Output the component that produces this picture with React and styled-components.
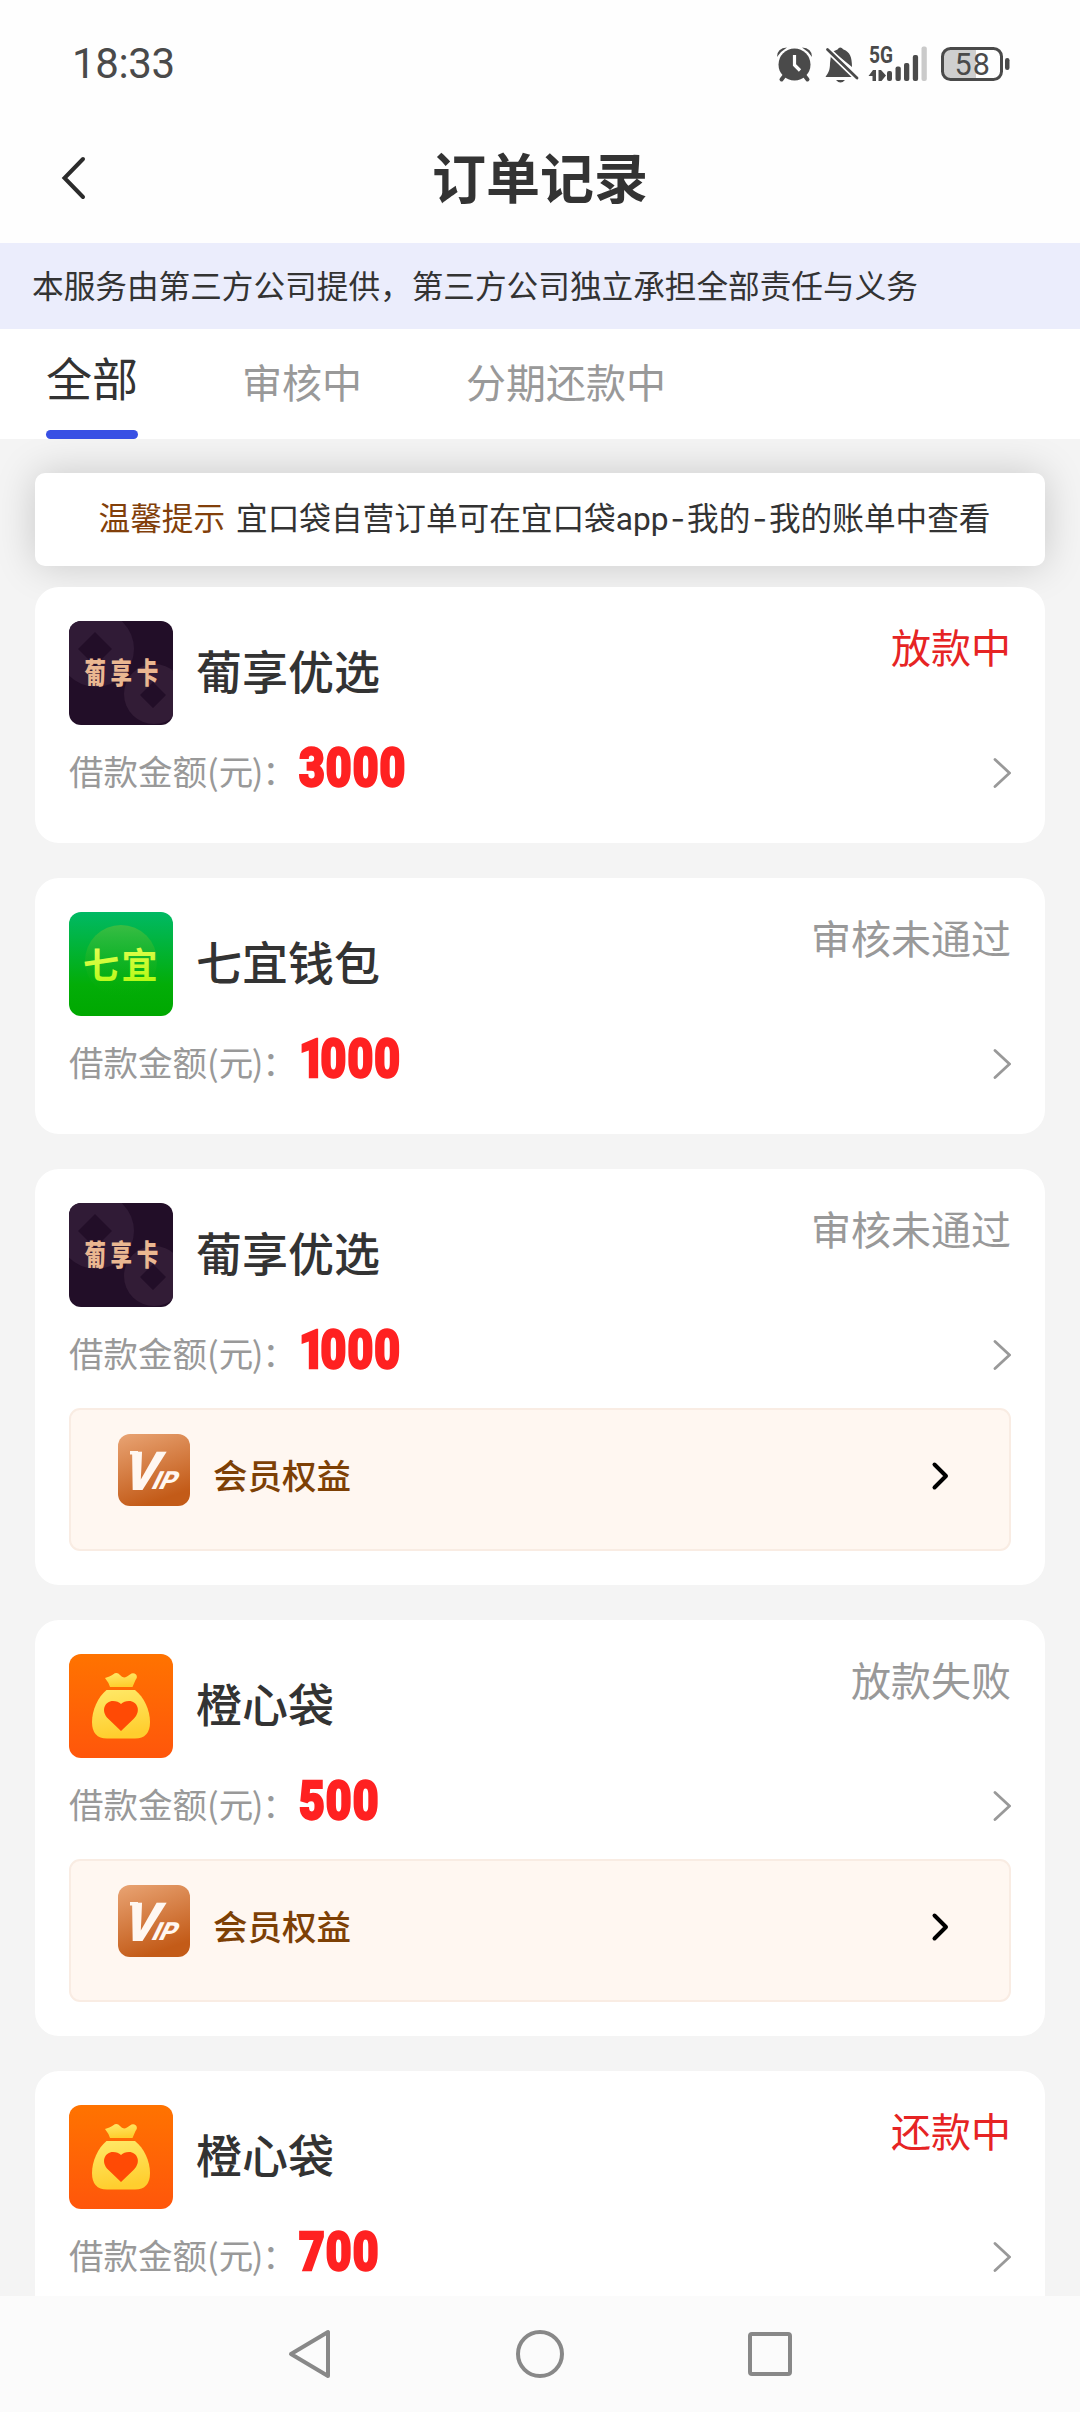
import React from 'react';
import styled, { createGlobalStyle } from 'styled-components';

const GlobalStyle = createGlobalStyle`
  * {
    box-sizing: border-box;
  }

  body {
    margin: 0;
    background: #f4f4f4;
    font-family: Roboto, "Noto Sans CJK SC", sans-serif;
    color: #333;
  }

  svg {
    display: block;
    flex: none;
  }
`;

const Screen = styled.div`
  display: flex;
  flex-direction: column;
  width: 1080px;
  height: 2412px;
  overflow: hidden;
  background: #f4f4f4;
`;

const StatusBar = styled.div`
  display: flex;
  align-items: center;
  justify-content: space-between;
  height: 113px;
  padding: 14px 68px 0 72px;
  background: #fefefe;
`;

const Clock = styled.span`
  font-size: 42px;
  line-height: 44px;
  letter-spacing: -0.4px;
  color: #4a4a4a;
`;

const StatusIcons = styled.div`
  display: flex;
  height: 44px;
`;

const Header = styled.header`
  display: grid;
  grid-template-columns: 100px 1fr 100px;
  align-items: center;
  height: 130px;
  background: #fefefe;

  svg {
    margin-left: 60px;
  }

  h1 {
    margin: 0;
    padding-top: 5px;
    font-size: 54px;
    line-height: 64px;
    font-weight: 700;
    text-align: center;
  }
`;

const Banner = styled.div`
  height: 86px;
  padding-left: 32px;
  background: #ebedfc;
  font-size: 31.65px;
  line-height: 89px;
  white-space: nowrap;
`;

const Tabs = styled.nav`
  display: flex;
  gap: 104px;
  height: 110px;
  padding-left: 46px;
  background: #fff;
`;

const Tab = styled.div`
  height: 110px;
  font-size: 40px;
  line-height: 111px;
  color: #999;
`;

const ActiveTab = styled(Tab)`
  display: flex;
  flex-direction: column;
  justify-content: space-between;
  font-size: 46px;
  line-height: 101px;
  color: #333;

  &::after {
    content: '';
    height: 9px;
    flex: none;
    border-radius: 5px;
    background: #3850e4;
  }

  span {
    height: 101px;
    padding-top: 1px;
  }
`;

const List = styled.main`
  flex: 1;
  min-height: 0;
  padding: 33.5px 35px 0;
  overflow: hidden;
`;

const Notice = styled.div`
  height: 93.5px;
  margin-bottom: 21px;
  padding-left: 63.5px;
  border-radius: 10px;
  background: #fff;
  box-shadow: 0 0 40px rgba(0, 0, 0, 0.18);
  font-size: 31.65px;
  line-height: 91px;
  white-space: nowrap;

  b {
    margin-right: 11px;
    font-weight: 400;
    color: #823f0a;
  }
`;

const Dash = styled.span`
  display: inline-block;
  width: 18.6px;
  font-family: Inter, sans-serif;
  text-align: center;
`;

const Card = styled.section`
  height: ${(p) => (p.$tall ? 416 : 256)}px;
  margin-bottom: 35px;
  padding: 34.3px 34px 0;
  border-radius: 24px;
  background: #fff;
`;

const CardTop = styled.div`
  display: flex;
  height: 104px;
`;

const Name = styled.h2`
  flex: 1;
  margin: 0 0 0 23px;
  font-size: 46px;
  line-height: 105px;
  font-weight: 500;
`;

const State = styled.span`
  font-size: 40px;
  line-height: 57px;
  color: ${(p) => (p.$active ? '#e62424' : '#999')};
`;

const AmountRow = styled.div`
  display: flex;
  align-items: center;
  height: 89px;
  font-size: 34.5px;
  color: #999;
  white-space: nowrap;

  svg {
    margin-left: auto;
    margin-top: 6px;
  }
`;

const Label = styled.span`
  width: 229px;
  font-family: "Noto Sans CJK SC", sans-serif;

  span {
    letter-spacing: -1.3px;
  }
`;

const Amount = styled.strong`
  margin: -3px 0 0 1px;
  font-family: Roboto, sans-serif;
  font-size: 53.5px;
  line-height: 60px;
  font-weight: 900;
  letter-spacing: 1.3px;
  color: #ff2121;
  -webkit-text-stroke: 2.4px #ff2121;
  transform: scaleX(0.83);
  transform-origin: left center;

  &::first-letter {
    letter-spacing: ${(p) => (p.$narrow ? '-5px' : '1.3px')};
  }
`;

const Member = styled.div`
  display: flex;
  height: 143px;
  margin-top: 11.5px;
  padding: 24px 60px 0 47px;
  border: 2px solid #f9ece3;
  border-radius: 11px;
  background: #fff7f1;

  span {
    flex: 1;
    margin-left: 23px;
    font-size: 34.5px;
    line-height: 87px;
    font-weight: 500;
    color: #7d4005;
  }

  svg:last-child {
    margin-top: 27px;
  }
`;

const NavBar = styled.footer`
  display: flex;
  align-items: center;
  justify-content: center;
  gap: 179.5px;
  height: 116px;
  background: #fbfbfb;
`;

const GrapeLogo = () => (
  <svg width="104" height="104" viewBox="0 0 104 104">
    <defs>
      <clipPath id="tile">
        <rect width="104" height="104" rx="12" />
      </clipPath>
    </defs>
    <g clipPath="url(#tile)">
      <rect width="104" height="104" fill="#220e28" />
      <circle cx="27" cy="28" r="38" fill="#301b36" />
      <circle cx="85" cy="73" r="30" fill="#321c36" />
      <path d="M26 11 43 28 26 45 9 28Z M84 61 97 74 84 87 71 74Z" fill="#220e28" />
    </g>
    <text
      transform="translate(15.5 62.5) scale(1 1.35)"
      fontFamily="Noto Sans CJK SC, sans-serif"
      fontWeight="900"
      fontSize="21.5"
      letterSpacing="4.6"
      fill="#eab791"
    >
      葡享卡
    </text>
  </svg>
);

const QiyiLogo = () => (
  <svg width="104" height="104" viewBox="0 0 104 104">
    <defs>
      <linearGradient id="green" x2="0" y2="1">
        <stop offset="0" stopColor="#00b964" />
        <stop offset="0.7" stopColor="#03ad08" />
        <stop offset="1" stopColor="#00a800" />
      </linearGradient>
      <linearGradient id="glow" x2="0" y2="1">
        <stop offset="0" stopColor="#39bd43" />
        <stop offset="1" stopColor="#08ad06" stopOpacity="0" />
      </linearGradient>
      <linearGradient id="lime" x2="0.2" y2="1">
        <stop offset="0" stopColor="#f2ff66" />
        <stop offset="1" stopColor="#b4fa12" />
      </linearGradient>
    </defs>
    <rect width="104" height="104" rx="12" fill="url(#green)" />
    <circle cx="52" cy="49" r="36" fill="url(#glow)" />
    <text
      x="14"
      y="67"
      fontFamily="Noto Sans CJK SC, sans-serif"
      fontWeight="700"
      fontSize="36"
      letterSpacing="2.5"
      fill="url(#lime)"
    >
      七宜
    </text>
  </svg>
);

const BagLogo = () => (
  <svg width="104" height="104" viewBox="0 0 104 104">
    <defs>
      <linearGradient id="orange" x2="0" y2="1">
        <stop offset="0" stopColor="#ff7300" />
        <stop offset="1" stopColor="#ff560b" />
      </linearGradient>
      <linearGradient id="gold" x2="0.2" y2="1">
        <stop offset="0" stopColor="#ffe968" />
        <stop offset="1" stopColor="#ffce2e" />
      </linearGradient>
    </defs>
    <rect width="104" height="104" rx="12" fill="url(#orange)" />
    <path
      d="M36 24C39 23 42 22 44 20.500Q48 17.500 51 21Q54 25 58 22.500L61 20.500Q64 18 67 20.500Q69 23 66.500 26L63.500 33H41Q40 29 36 24Z"
      fill="url(#gold)"
    />
    <path
      d="M37.500 36H66C75 43 81 56 81 68Q81 84.500 66 84.500H38Q23 84.500 23 68C23 56 29 43 37.500 36Z"
      fill="url(#gold)"
    />
    <path
      d="M52 77 39.500 65C31 57 36 47 44 47Q49 47 52 50Q55 47 60 47C68 47 73 57 64.500 65Z"
      fill="#ff4a05"
    />
  </svg>
);

const VipIcon = () => (
  <svg width="72" height="72" viewBox="0 0 72 72">
    <defs>
      <linearGradient id="copper" x2="0.35" y2="1">
        <stop offset="0" stopColor="#e9a474" />
        <stop offset="1" stopColor="#c35b18" />
      </linearGradient>
    </defs>
    <rect width="72" height="72" rx="12" fill="url(#copper)" />
    <rect x="12" y="17" width="8" height="3.500" fill="#fff7f1" />
    <g fill="#fff7f1" fontFamily="Roboto, sans-serif" fontWeight="900">
      <text transform="translate(2.500 55.500) skewX(-17) scale(0.96 1)" fontSize="54">
        V
      </text>
      <text transform="translate(32 55) skewX(-26)" fontSize="25">
        IP
      </text>
    </g>
  </svg>
);

const Arrow = () => (
  <svg width="18" height="30" viewBox="0 0 18 30" fill="none">
    <path d="M2 1.500 16.500 15 2 28.500" stroke="#999" strokeWidth="2.800" strokeLinecap="round" />
  </svg>
);

const BoldArrow = () => (
  <svg width="18" height="30" viewBox="0 0 18 30" fill="none">
    <path
      d="M3.500 3.500 15 15 3.500 26.500"
      stroke="#000"
      strokeWidth="4"
      strokeLinecap="round"
      strokeLinejoin="round"
    />
  </svg>
);

const SystemIcons = () => (
  <svg width="236" height="44" viewBox="776 41 236 44" fill="#4a4a4a">
    {/* alarm */}
    <circle cx="794.500" cy="63.500" r="16" />
    <path d="M777 56Q777 47 787 46.500Q781 50 777 56Z M812 56Q812 47 802 46.500Q808 50 812 56Z" />
    <path d="M785 74 781.500 78.500M804 74 807.500 78.500" stroke="#4a4a4a" strokeWidth="4" strokeLinecap="round" />
    <path d="M794.500 54V64L800 69.500" stroke="#fff" strokeWidth="3.200" fill="none" />
    {/* muted bell */}
    <path d="M837.500 48.500Q840 44.500 843.500 48.500C850 51 852 56 852 66L833 50.500Z" />
    <path d="M831 54 854 76H825.500C828 72 830 70 830 62Z" />
    <path d="M836 79H845Q840.500 84 836 79Z" />
    <path d="M827.500 48.500 857 77" stroke="#fff" strokeWidth="6" />
    <path d="M827.500 48.500 857 77" stroke="#4a4a4a" strokeWidth="2.800" strokeLinecap="round" />
    {/* signal */}
    <text x="869" y="62" fontSize="23" fontWeight="700" textLength="24" lengthAdjust="spacingAndGlyphs">
      5G
    </text>
    <path d="M873 69H876V80H872.500V75H868.500Z M878.500 69H881L886 74.500 881.500 80H878.500Z" />
    <rect x="887" y="70" width="5" height="10" rx="2" />
    <rect x="895.500" y="65.500" width="5.300" height="14.500" rx="2" />
    <rect x="904" y="62" width="5.300" height="18" rx="2" />
    <rect x="912.800" y="54" width="5.300" height="26" rx="2" />
    <rect x="921.500" y="45.500" width="5.300" height="34.500" rx="2" fill="#cacaca" />
    {/* battery */}
    <path d="M950 48H976V78H950Q943 78 943 71V55Q943 48 950 48Z" fill="#cfcfcf" />
    <rect x="942.500" y="47.500" width="59" height="31" rx="8" fill="none" stroke="#4a4a4a" strokeWidth="3" />
    <rect x="1005" y="57" width="4.500" height="12" rx="2.200" />
    <text x="954.500" y="73.500" fontSize="30.500" textLength="35.500">
      58
    </text>
  </svg>
);

const logos = { grape: GrapeLogo, qiyi: QiyiLogo, bag: BagLogo };

const orders = [
  { id: 1, logo: 'grape', name: '葡享优选', amount: '3000', state: '放款中', active: true },
  { id: 2, logo: 'qiyi', name: '七宜钱包', amount: '1000', state: '审核未通过' },
  { id: 3, logo: 'grape', name: '葡享优选', amount: '1000', state: '审核未通过', member: true },
  { id: 4, logo: 'bag', name: '橙心袋', amount: '500', state: '放款失败', member: true },
  { id: 5, logo: 'bag', name: '橙心袋', amount: '700', state: '还款中', active: true },
];

const OrderCard = ({ order }) => {
  const Logo = logos[order.logo];
  return (
    <Card $tall={order.member}>
      <CardTop>
        <Logo />
        <Name>{order.name}</Name>
        <State $active={order.active}>{order.state}</State>
      </CardTop>
      <AmountRow>
        <Label>
          借款金额(<span>元)</span>：
        </Label>
        <Amount $narrow={order.amount[0] === '1'}>{order.amount}</Amount>
        <Arrow />
      </AmountRow>
      {order.member && (
        <Member>
          <VipIcon />
          <span>会员权益</span>
          <BoldArrow />
        </Member>
      )}
    </Card>
  );
};

const App = () => (
  <>
    <GlobalStyle />
    <Screen>
      <StatusBar>
        <Clock>18:33</Clock>
        <StatusIcons>
          <SystemIcons />
        </StatusIcons>
      </StatusBar>
      <Header>
        <svg width="28" height="44" viewBox="0 0 28 44" fill="none">
          <path d="M23 3 4.500 22 23 41" stroke="#2b2b2b" strokeWidth="4" strokeLinecap="round" />
        </svg>
        <h1>订单记录</h1>
      </Header>
      <Banner>本服务由第三方公司提供，第三方公司独立承担全部责任与义务</Banner>
      <Tabs>
        <ActiveTab>
          <span>全部</span>
        </ActiveTab>
        <Tab>审核中</Tab>
        <Tab>分期还款中</Tab>
      </Tabs>
      <List>
        <Notice>
          <b>温馨提示</b>
          宜口袋自营订单可在宜口袋app<Dash>-</Dash>我的<Dash>-</Dash>我的账单中查看
        </Notice>
        {orders.map((order) => (
          <OrderCard key={order.id} order={order} />
        ))}
      </List>
      <NavBar>
        <svg width="50" height="50" viewBox="0 0 50 50" fill="none" stroke="#888" strokeWidth="4">
          <path d="M42 3V47L5 25Z" strokeLinejoin="round" />
        </svg>
        <svg width="50" height="50" viewBox="0 0 50 50" fill="none" stroke="#888" strokeWidth="4">
          <circle cx="25" cy="25" r="22" />
        </svg>
        <svg width="50" height="50" viewBox="0 0 50 50" fill="none" stroke="#888" strokeWidth="4">
          <rect x="5" y="5" width="40" height="40" rx="2" />
        </svg>
      </NavBar>
    </Screen>
  </>
);

export default App;
